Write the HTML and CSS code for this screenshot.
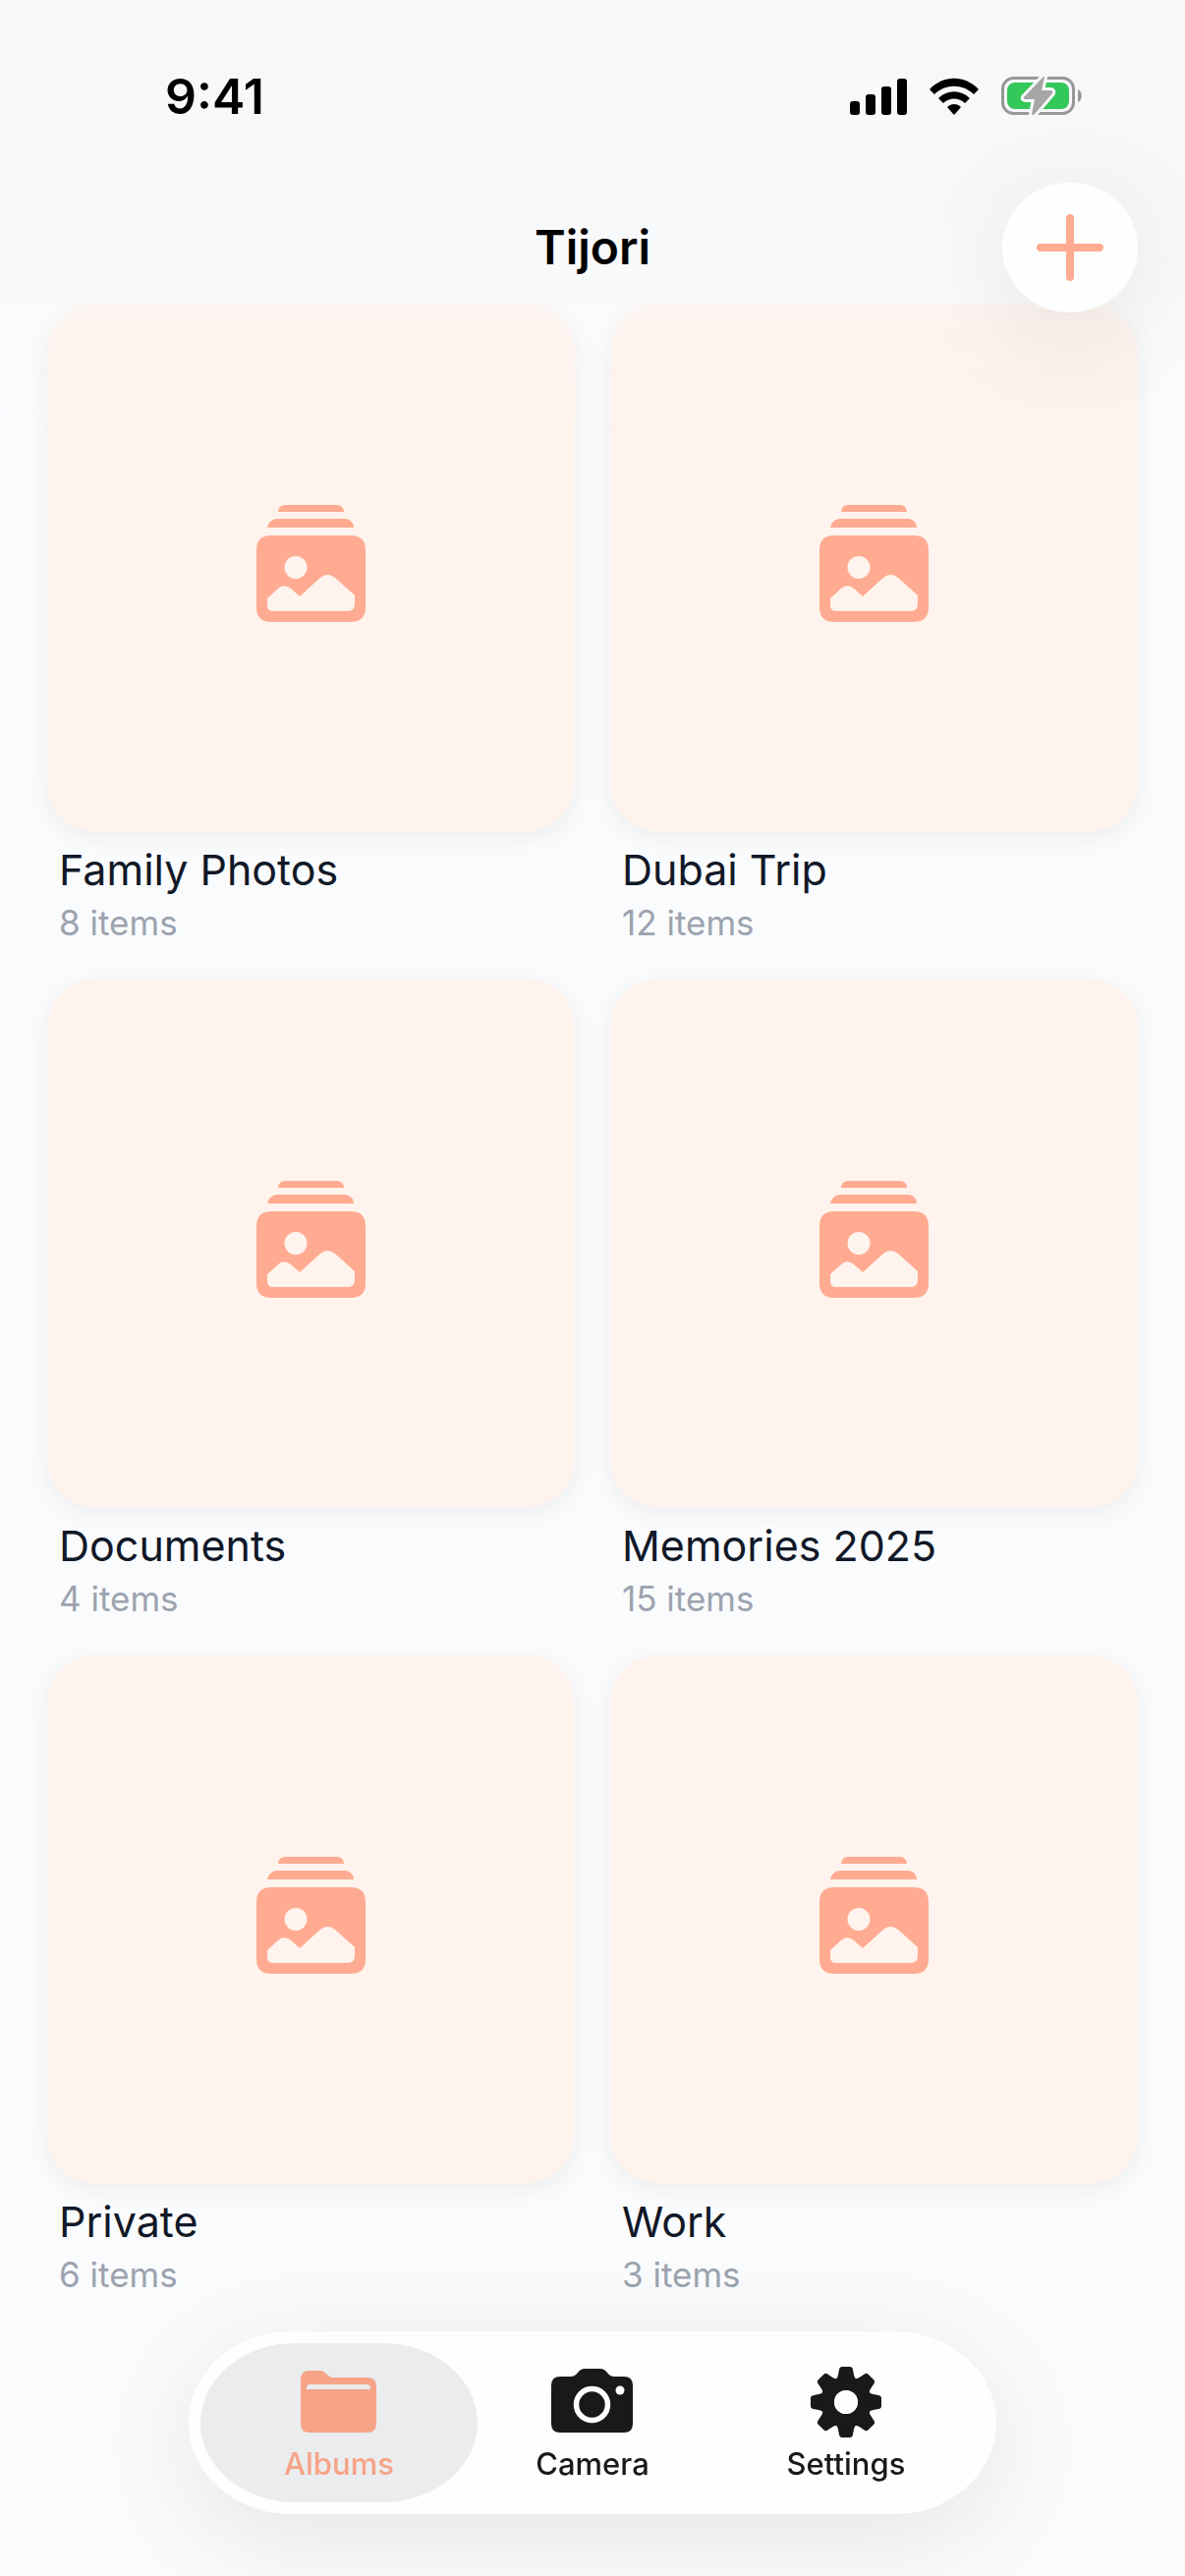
FILE: index.html
```html
<!DOCTYPE html>
<html lang="en">
    <head>
        <meta charset="utf-8">
        <meta name="viewport" content="width=device-width, initial-scale=1.0">
        <title>Tijori</title>
        <link rel="stylesheet" href="styles.css">
    </head>
    <body>
        <svg class="sprite" aria-hidden="true">
            <symbol id="album-icon" viewBox="0 0 111 119">
                <path d="M22 7C22 3 25 0 29 0H82C86 0 89 3 89 7Z"/>
                <path d="M11 23C12 18 16 14 21 14H90C95 14 99 18 99 23Z"/>
                <path fill-rule="evenodd" d="M15 31H96Q111 31 111 46V104Q111 119 96 119H15Q0 119 0 104V46Q0 31 15 31ZM40 52A11.5 11.5 0 1 0 40 75A11.5 11.5 0 1 0 40 52ZM11 95V102Q11 108 17 108H93Q100 108 100 101V92L80 74Q72 68 65 74L44 93L35 85Q28 79 21 86Z"/>
            </symbol>
        </svg>
        <header>
            <div class="status">
                <time>9:41</time>
                <div class="status-icons">
                    <svg width="58" height="38" viewBox="0 0 58 38" aria-hidden="true">
                        <rect x="0" y="24" width="10" height="14" rx="3"/>
                        <rect x="16" y="17" width="10" height="21" rx="3"/>
                        <rect x="32" y="9" width="10" height="29" rx="3"/>
                        <rect x="48" y="1" width="10" height="37" rx="3"/>
                    </svg>
                    <svg width="50" height="38" viewBox="0 0 50 38" aria-hidden="true">
                        <path d="M0 12C14 -3 36 -3 50 12L45 17C34 6 16 6 5 17Z"/>
                        <path d="M9 21C18 12 32 12 41 21L36 26C30 20 20 20 14 26Z"/>
                        <path d="M18 30C22 26 28 26 32 30L26 37Q25 38 24 37Z"/>
                    </svg>
                    <svg width="83" height="42" viewBox="0 0 83 42" aria-hidden="true">
                        <rect x="1.5" y="2.5" width="72" height="36" rx="11" fill="none" stroke="#98989a" stroke-width="3"/>
                        <rect x="6" y="7" width="63" height="27" rx="8" fill="#34c759"/>
                        <path d="M78 14C83 16 83 25 78 27Z" fill="#98989a"/>
                        <path d="M42 2L23 22Q22 24 25 24H34L31 39Q32 41 34 39L52 18Q53 15 50 15H41L44 2Q44 0 42 2Z" fill="#a6a6a8" stroke="#f7f8fa" stroke-width="6" paint-order="stroke"/>
                    </svg>
                </div>
            </div>
            <div class="titlebar">
                <h1>Tijori</h1>
                <button class="add" aria-label="New album">
                    <svg width="70" height="70" viewBox="0 0 70 70" aria-hidden="true">
                        <path d="M35 5V65M5 35H65" fill="none" stroke="currentColor" stroke-width="8" stroke-linecap="round"/>
                    </svg>
                </button>
            </div>
        </header>
        <main>
            <a class="album" href="#">
                <div class="cover"><svg><use href="#album-icon"/></svg></div>
                <h2>Family Photos</h2>
                <p>8 items</p>
            </a>
            <a class="album" href="#">
                <div class="cover"><svg><use href="#album-icon"/></svg></div>
                <h2>Dubai Trip</h2>
                <p>12 items</p>
            </a>
            <a class="album" href="#">
                <div class="cover"><svg><use href="#album-icon"/></svg></div>
                <h2>Documents</h2>
                <p>4 items</p>
            </a>
            <a class="album" href="#">
                <div class="cover"><svg><use href="#album-icon"/></svg></div>
                <h2>Memories 2025</h2>
                <p>15 items</p>
            </a>
            <a class="album" href="#">
                <div class="cover"><svg><use href="#album-icon"/></svg></div>
                <h2>Private</h2>
                <p>6 items</p>
            </a>
            <a class="album" href="#">
                <div class="cover"><svg><use href="#album-icon"/></svg></div>
                <h2>Work</h2>
                <p>3 items</p>
            </a>
        </main>
        <nav class="tabs">
            <a class="tab active" href="#" aria-current="page">
                <svg width="78" height="72" viewBox="0 0 78 72" aria-hidden="true">
                    <path fill-rule="evenodd" d="M9 4H20Q23 4 26 7Q29 11 33 11H68Q77 11 77 20V58Q77 67 68 67H9Q0 67 0 58V13Q0 4 9 4ZM6 23H71V22Q71 18 67 18H10Q6 18 6 22Z"/>
                </svg>
                <span>Albums</span>
            </a>
            <a class="tab" href="#">
                <svg width="84" height="72" viewBox="0 0 84 72" aria-hidden="true">
                    <path d="M9 10H20Q24 10 27 6Q30 2 34 2H50Q54 2 57 6Q60 10 64 10H74Q83 10 83 19V58Q83 67 74 67H9Q0 67 0 58V19Q0 10 9 10Z"/>
                    <circle cx="41.5" cy="38.5" r="16" fill="none" stroke="#fdfefe" stroke-width="5.5"/>
                    <circle cx="70" cy="24" r="4.5" fill="#fdfefe"/>
                </svg>
                <span>Camera</span>
            </a>
            <a class="tab" href="#">
                <svg width="72" height="72" viewBox="-36 -36 72 72" aria-hidden="true">
                    <defs><path id="tooth" d="M-10 -22Q-8 -26 -7 -33Q-6.5 -36 -4 -36H4Q6.5 -36 7 -33Q8 -26 10 -22Z"/></defs>
                    <use href="#tooth"/>
                    <use href="#tooth" transform="rotate(45)"/>
                    <use href="#tooth" transform="rotate(90)"/>
                    <use href="#tooth" transform="rotate(135)"/>
                    <use href="#tooth" transform="rotate(180)"/>
                    <use href="#tooth" transform="rotate(225)"/>
                    <use href="#tooth" transform="rotate(270)"/>
                    <use href="#tooth" transform="rotate(315)"/>
                    <circle r="19" fill="none" stroke="currentColor" stroke-width="14"/>
                    <circle r="12" fill="#fdfefe"/>
                </svg>
                <span>Settings</span>
            </a>
        </nav>
    </body>
</html>
```
FILE: styles.css
```css
body {
    margin: 0;
    min-height: 100vh;
    background: #fafbfd;
    color: #000;
    font-family: Inter, "Liberation Sans", sans-serif;
}

h1, h2, p {
    margin: 0;
}

a {
    color: inherit;
    text-decoration: none;
}

svg {
    display: block;
    fill: currentColor;
}

.sprite {
    display: none;
}

header {
    display: flow-root;
    position: relative;
    z-index: 1;
    background: linear-gradient(#f7f8fa 60%, #f9fafa);
}

header::after {
    content: "";
    position: absolute;
    top: 100%;
    left: 0;
    right: 0;
    height: 130px;
    background: linear-gradient(rgba(249, 250, 250, 0.35), rgba(250, 250, 251, 0));
    backdrop-filter: blur(3px);
    -webkit-mask-image: linear-gradient(#000, transparent);
    mask-image: linear-gradient(#000, transparent);
    pointer-events: none;
}

.status {
    display: flex;
    justify-content: space-between;
    align-items: center;
    height: 72px;
    padding: 62px 104px 52px 168px;
}

.status time {
    font-size: 50px;
    font-weight: 600;
    line-height: 72px;
}

.status-icons {
    display: flex;
    align-items: center;
    gap: 23px;
}

.titlebar {
    display: grid;
    grid-template-columns: 1fr auto 1fr;
    align-items: center;
    height: 132px;
    padding: 0 48px;
    margin-bottom: -9px;
}

.titlebar h1 {
    grid-column: 2;
    font-size: 48px;
    font-weight: 600;
    line-height: 60px;
}

.add {
    position: relative;
    z-index: 1;
    display: flex;
    justify-content: center;
    align-items: center;
    justify-self: end;
    width: 138px;
    height: 132px;
    padding: 0;
    border: none;
    border-radius: 50%;
    background: #fdfefe;
    color: #ffab91;
    box-shadow: 0 24px 110px rgba(0, 0, 0, 0.09);
    cursor: pointer;
}

main {
    display: grid;
    grid-template-columns: 1fr 1fr;
    gap: 36px;
    padding: 0 48px;
}

.cover {
    display: flex;
    justify-content: center;
    align-items: center;
    box-sizing: border-box;
    aspect-ratio: 1;
    padding-bottom: 8px;
    border-radius: 48px;
    background: #fff3ed;
    color: #ffab91;
    box-shadow: 0 6px 24px rgba(0, 0, 0, 0.06);
}

.cover svg {
    width: 111px;
    height: 119px;
}

.album h2 {
    margin: 12px 12px 0;
    font-size: 43px;
    font-weight: 400;
    line-height: 54px;
    color: #111827;
}

.album p {
    margin: 6px 12px 0;
    font-size: 35px;
    line-height: 43px;
    color: #9ca3af;
}

.tabs {
    position: fixed;
    bottom: 63px;
    left: 50%;
    transform: translateX(-50%);
    z-index: 2;
    display: flex;
    padding: 12px;
    border-radius: 104px / 50%;
    background: #fdfefe;
    color: #18191b;
    box-shadow: 0 24px 110px rgba(0, 0, 0, 0.09);
}

.tab {
    display: flex;
    flex-direction: column;
    align-items: center;
    gap: 8px;
    box-sizing: border-box;
    width: 282px;
    height: 162px;
    padding-top: 24px;
    border-radius: 96px / 50%;
    font-size: 31px;
    font-weight: 500;
    line-height: 38px;
}

.tab + .tab {
    margin-left: -24px;
}

.tab.active {
    background: #ebeced;
    color: #f6a388;
}
```
